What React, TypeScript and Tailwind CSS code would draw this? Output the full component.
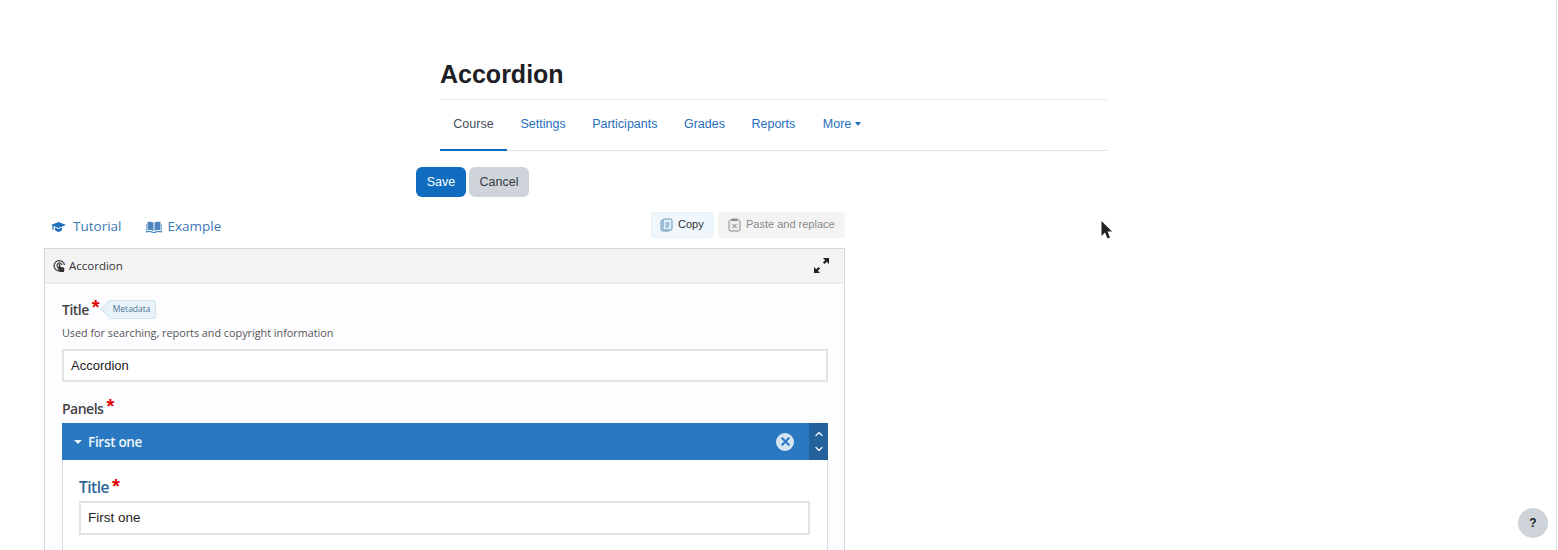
import React from 'react';
import { ChevronUp, ChevronDown, X } from 'lucide-react';

const sans = "font-['Liberation_Sans',Arial,sans-serif]";
const openSans = "font-['Open_Sans','Noto_Sans',sans-serif]";

const Star = () => <span className="text-[#e00000] text-[20px] font-bold leading-none relative -top-[2px] ml-[3px] font-['Liberation_Sans',sans-serif]">*</span>;

const navItems = ['Settings', 'Participants', 'Grades', 'Reports'];

const CapIcon = () => (
    <svg width="15" height="12" viewBox="0 0 15 12" className="ml-[7px] mr-[7px]">
        <path d="M7.5 1 15 4 7.5 7 2.6 5v3.2L2 9.4 1.4 8.2V4.5L0 4z" fill="#1f6fbd" />
        <path d="M4 6.6 7.5 8 11 6.6V9c-1 1.2-2.2 1.8-3.5 1.8S5 10.2 4 9z" fill="#1f6fbd" />
    </svg>
);

const BookIcon = () => (
    <svg width="16" height="12" viewBox="0 0 16 12" className="ml-[25px] mr-[5px]">
        <path d="M1.5 1C3.5.5 6 .6 7.5 1.6V10C6 9 3.5 8.9 1.5 9.4z" fill="#4f86bd" />
        <path d="M14.5 1C12.5.5 10 .6 8.5 1.6V10c1.5-1 4-1.1 6-.6z" fill="#4f86bd" />
        <path d="M0 3v8c2.5-.6 5.500-.5 8 .6 2.500-1.100 5.500-1.200 8-.6V3" fill="none" stroke="#1f6fbd" strokeWidth="1" />
    </svg>
);

const CopyIcon = () => (
    <svg width="13" height="14" viewBox="0 0 13 14" className="mr-[5px]">
        <rect x="1" y="2" width="9" height="11" rx="1.500" fill="#cfe3f1" stroke="#6d9cc0" strokeWidth="1" />
        <rect x="3" y="1" width="9" height="11" rx="1.500" fill="#e3eff7" stroke="#5f93bb" strokeWidth="1" />
        <path d="M5.500 5h4M5.500 7h4M5.500 9h3" stroke="#5f93bb" strokeWidth="1" />
    </svg>
);

const PasteIcon = () => (
    <svg width="13" height="14" viewBox="0 0 13 14" className="mr-[5px]">
        <rect x="1" y="2" width="11" height="11" rx="1.500" fill="#eeeced" stroke="#8d8b8c" strokeWidth="1" />
        <rect x="3.500" y="0.500" width="6" height="2.500" fill="#8d8b8c" />
        <path d="m4.500 6 4 4m0-4-4 4" stroke="#777" strokeWidth="1" />
    </svg>
);

const TouchIcon = () => (
    <svg width="13" height="14" viewBox="0 0 13 14">
        <path d="M10 10.500A5.200 5.200 0 1 1 11.500 6" fill="none" stroke="#444" strokeWidth="1.300" />
        <path d="M8 8.500A2.500 2.500 0 1 1 9 6" fill="none" stroke="#444" strokeWidth="1.200" />
        <path d="M5.800 5.500c0-1 1.500-1 1.500 0v2.300l3.300.7c.6.2.8.6.7 1.200L11 13H7L4.800 9.500c-.3-.7.4-1.200 1-.7z" fill="#333" />
    </svg>
);

const DiagonalExpand = () => (
    <svg width="17" height="17" viewBox="0 0 17 17" className="mr-[6px]">
        <path d="M10 1h6v6l-2.200-2.200-2.300 2.300-1.600-1.600 2.300-2.300z" fill="#222" />
        <path d="M7 16H1v-6l2.200 2.200 2.300-2.300 1.600 1.600-2.300 2.300z" fill="#222" />
    </svg>
);

const App: React.FC = () => {
    return (
        <div className={`relative h-[550px] w-[1558px] overflow-hidden bg-white ${sans}`}>
            {/* Course header */}
            <div className="ml-[440px] w-[668px] pt-[59px]">
                <h1 className="text-[25px] leading-[30px] font-bold text-[#1d2125] pb-[10px] border-b border-[#e9ecef]">Accordion</h1>
                <nav className="flex h-[51px] border-b border-[#dee2e6] text-[12.500px]">
                    <span className="flex items-center w-[67px] justify-center text-[#495057] border-b-2 border-[#0f6cbf] h-[51px]">Course</span>
                    <div className="flex items-center gap-[26.500px] ml-[13.500px] pb-[2px] text-[#1f6fbd]">
                        {navItems.map((item) => (
                            <span key={item}>{item}</span>
                        ))}
                        <span className="flex items-center gap-[4px] ml-[1px]">
                            More
                            <span className="w-0 h-0 border-x-[3.500px] border-x-transparent border-t-[4px] border-t-[#1f6fbd]"></span>
                        </span>
                    </div>
                </nav>
            </div>

            <div className="ml-[416px] mt-[16px] flex gap-[3px] text-[12.500px]">
                <button className="w-[50px] h-[30px] rounded-[6px] bg-[#0f6cbf] text-white">Save</button>
                <button className="w-[60px] h-[30px] rounded-[6px] bg-[#ced4da] text-[#343a40]">Cancel</button>
            </div>

            {/* H5P editor */}
            <div className={`ml-[44px] w-[801px] ${openSans}`}>
                <div className="flex items-center justify-between mt-[14px] h-[27px]">
                    <div className="flex items-center text-[13.500px] pt-[4px] text-[#3a7ab5]">
                        <CapIcon />
                        <span>Tutorial</span>
                        <BookIcon />
                        <span>Example</span>
                    </div>
                    <div className="flex items-center gap-[4px] text-[11px] font-['Liberation_Sans',sans-serif]">
                        <button className="flex items-center h-[26px] w-[63px] pl-[8px] rounded-[3px] bg-[#eff7fc] text-[#333] border border-[#e6f1f8]">
                            <CopyIcon />
                            Copy
                        </button>
                        <button className="flex items-center h-[26px] w-[127px] pl-[10px] rounded-[3px] bg-[#f5f4f5] text-[#8a8a8a]">
                            <PasteIcon />
                            Paste and replace
                        </button>
                    </div>
                </div>

                <div className="mt-[10px] h-[400px] border border-[#d8d6d8] bg-[#fdfcfe]">
                    <div className="flex items-center justify-between h-[35px] px-[8px] bg-[#f5f4f5] border-b-2 border-[#eeedee]">
                        <div className="flex items-center gap-[3px] text-[11.500px] font-medium text-[#333]">
                            <TouchIcon />
                            Accordion
                        </div>
                        <DiagonalExpand />
                    </div>

                    <div className="pl-[17px] pr-[16px]">
                        <div className="flex items-center mt-[14px] h-[22px]">
                            <span className="text-[14px] font-semibold tracking-[-0.500px] text-[#444]">Title</span>
                            <Star />
                            <span className="relative ml-[9px] h-[19px] w-[47px] flex items-center justify-center rounded-r-[3px] bg-[#e9f3fa] border border-l-0 border-[#cfe2f0] text-[8.500px] text-[#4f7596]">
                                <span className="absolute -left-[5.500px] top-[2.500px] w-[12px] h-[12px] rotate-45 bg-[#e9f3fa] border-l border-b border-[#cfe2f0]"></span>
                                <span className="relative">Metadata</span>
                            </span>
                        </div>
                        <p className="text-[10.800px] leading-[15px] mt-[5px] text-[#555]">Used for searching, reports and copyright information</p>
                        <div className="mt-[9px] h-[33px] flex items-center px-[7px] border-2 border-[#e4e3e4] bg-white text-[13px] text-[#222] font-['Liberation_Sans',sans-serif]">Accordion</div>

                        <div className="flex items-center mt-[16px] h-[20px]">
                            <span className="text-[14px] font-semibold tracking-[-0.500px] text-[#444]">Panels</span>
                            <Star />
                        </div>

                        <div className="mt-[5px] border border-[#dcdbdc] border-t-0 h-[200px] bg-white">
                            <div className="flex items-center h-[37px] bg-[#2b78c2] -mx-px text-white">
                                <span className="ml-[12px] w-0 h-0 border-x-[4px] border-x-transparent border-t-[4px] border-t-[#e8f1f9]"></span>
                                <span className="ml-[6px] pt-[1px] text-[13.500px] font-semibold tracking-[-0.300px] text-[#eef5fb]">First one</span>
                                <span className="ml-auto flex items-center justify-center w-[18px] h-[18px] rounded-full bg-[#d5e5f3]">
                                    <X size={13} strokeWidth={4} className="text-[#2b78c2]" />
                                </span>
                                <div className="ml-[15px] flex flex-col items-center justify-center w-[19px] h-full bg-[#24629e] text-[#e3eef8]">
                                    <ChevronUp size={12} strokeWidth={3} />
                                    <ChevronDown size={12} strokeWidth={3} className="mt-[3px]" />
                                </div>
                            </div>
                            <div className="pl-[16px] pr-[17px]">
                                <div className="flex items-center mt-[18px] h-[20px]">
                                    <span className="text-[15.500px] font-semibold tracking-[-0.500px] text-[#2f6596]">Title</span>
                                    <Star />
                                </div>
                                <div className="mt-[3px] h-[34px] flex items-center px-[7px] border-2 border-[#e4e3e4] bg-white text-[13.500px] text-[#222] font-['Liberation_Sans',sans-serif]">First one</div>
                            </div>
                        </div>
                    </div>
                </div>
            </div>

            {/* Screen recording cursor */}
            <svg className="absolute left-[1100px] top-[220px]" width="14" height="20" viewBox="0 0 14 20">
                <path d="M1.500 1v15l3.500-3.500 2.500 6 2.500-1-2.500-6h4.500z" fill="#222" />
            </svg>

            <button className="absolute left-[1518px] top-[508px] w-[30px] h-[30px] rounded-full bg-[#ced4da] text-[#1d2125] text-[12px] font-bold">?</button>
            <div className="absolute right-[1px] top-0 h-full w-px bg-[#dee2e6]"></div>
        </div>
    );
};

export default App;
